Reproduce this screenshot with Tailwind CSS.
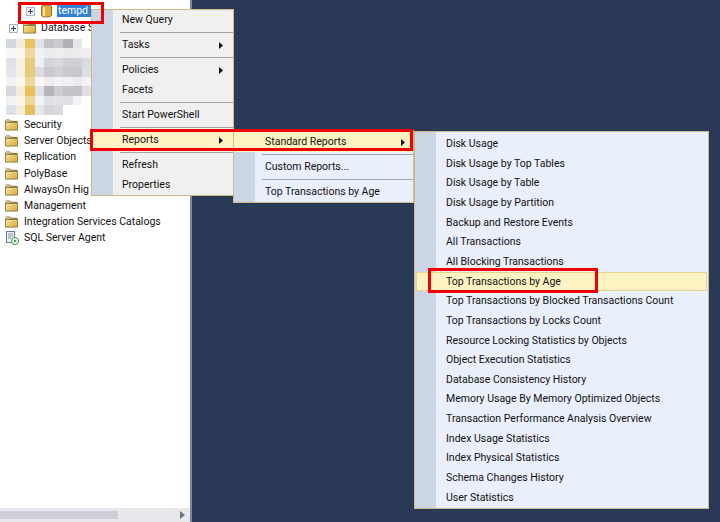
<!DOCTYPE html>
<html lang="en">
<head>
  <meta charset="UTF-8" />
  <title>Object Explorer</title>
  <script src="https://cdn.jsdelivr.net/npm/@tailwindcss/browser@4"></script>
</head>
<body class="relative w-[720px] h-[522px] overflow-hidden bg-[#2a3a56] font-['Roboto',sans-serif] text-[10.5px] text-[#111]">

  <svg class="absolute w-0 h-0">
    <defs>
      <linearGradient id="fold" x1="0" y1="0" x2="1" y2="1">
        <stop offset="0" stop-color="#fdf0b0" />
        <stop offset="1" stop-color="#dca52e" />
      </linearGradient>
      <symbol id="folder" viewBox="0 0 14 12">
        <path d="M.5 2.5V1.5L1.5.5H5L6 2h7l.5.5v9H.5z" fill="url(#fold)" stroke="#8a7a4a" />
        <path d="M1 3h12" stroke="#5a5236" />
      </symbol>
      <symbol id="plus" viewBox="0 0 9 9">
        <rect x=".5" y=".5" width="8" height="8" fill="#f4f4f8" stroke="#b0b4c0" />
        <path d="M2 4.5h5M4.5 2v5" stroke="#2b3f75" />
      </symbol>
    </defs>
  </svg>

  <!-- Object explorer -->
  <aside class="w-[192px] h-full flex flex-col bg-white border-r-2 border-[#7d879c]">
    <div class="flex-1 pt-[3px] leading-[16px]">
      <div class="h-[16.2px] flex items-center pl-[26px]">
        <svg class="w-[9px] h-[9px] shrink-0" ><use href="#plus" /></svg>
        <svg class="w-[11px] h-[14px] ml-[6px] shrink-0" viewBox="0 0 11 14">
          <path d="M.5 2.5C.5 .6 10.5 .6 10.5 2.5v9c0 1.9-10 1.9-10 0z" fill="#e2ad36" stroke="#8f7430" />
          <path d="M3 3v9" stroke="#f8e7a6" stroke-width="2" />
        </svg>
        <span class="ml-[5px] pl-[1px] w-[34px] h-[12px] flex items-center bg-[#3580d4] text-white">tempd</span>
      </div>
      <div class="h-[16.2px] mt-[1px] flex items-center pl-[9px] whitespace-nowrap">
        <svg class="w-[9px] h-[9px] shrink-0"><use href="#plus" /></svg>
        <svg class="w-[13px] h-[12px] ml-[5px] shrink-0"><use href="#folder" /></svg>
        <span class="ml-[5px]">Database S</span>
      </div>

      <!-- blurred databases -->
      <div class="grid grid-cols-[repeat(9,9.5px)] auto-rows-[9.5px] ml-[6px] mt-[2.6px] mb-[1px] h-[77px]">
        <i class="bg-[#d6d8df]"></i><i class="bg-[#f0eddc]"></i><i class="bg-[#e8c35f]"></i><i class="bg-[#e2e4ea]"></i><i class="bg-[#c2c3c8]"></i><i class="bg-[#cbcccf]"></i><i class="bg-[#b0b1b6]"></i><i class="bg-[#e4e6ea]"></i><i class="bg-white"></i>
        <i class="bg-[#f7f7f7]"></i><i class="bg-[#fbf9ee]"></i><i class="bg-[#efd89a]"></i><i class="bg-[#f2f2f6]"></i><i class="bg-[#ececef]"></i><i class="bg-[#eeeeef]"></i><i class="bg-[#ebebee]"></i><i class="bg-[#ededf0]"></i><i class="bg-[#eeeef0]"></i>
        <i class="bg-[#dfe1e8]"></i><i class="bg-[#f5f1e0]"></i><i class="bg-[#e8cb7a]"></i><i class="bg-[#eeeff5]"></i><i class="bg-[#d4d4da]"></i><i class="bg-[#d7d7dc]"></i><i class="bg-[#cfcfd5]"></i><i class="bg-[#d0d0d6]"></i><i class="bg-[#dadae2]"></i>
        <i class="bg-[#e5e6ed]"></i><i class="bg-[#f5f1df]"></i><i class="bg-[#e8cb78]"></i><i class="bg-[#dcdce0]"></i><i class="bg-[#c8c9d0]"></i><i class="bg-[#d0d0d5]"></i><i class="bg-[#c9c9ce]"></i><i class="bg-[#c8c8ce]"></i><i class="bg-[#dedfe6]"></i>
        <i class="bg-[#f3f3f5]"></i><i class="bg-[#faf8ec]"></i><i class="bg-[#efd89a]"></i><i class="bg-[#f8f8fa]"></i><i class="bg-[#eeeef0]"></i><i class="bg-[#f3f3f5]"></i><i class="bg-[#f0f0f2]"></i><i class="bg-[#eaeaec]"></i><i class="bg-[#f3f3f5]"></i>
        <i class="bg-[#d8d9df]"></i><i class="bg-[#f2eed9]"></i><i class="bg-[#e8c055]"></i><i class="bg-[#e0e2e8]"></i><i class="bg-[#b5b6bc]"></i><i class="bg-[#cdcdd2]"></i><i class="bg-[#c3c3c8]"></i><i class="bg-[#c4c4c8]"></i><i class="bg-[#e0e0e4]"></i>
        <i class="bg-[#f3f3f5]"></i><i class="bg-[#f9f6e8]"></i><i class="bg-[#eed79a]"></i><i class="bg-[#f3f3f6]"></i><i class="bg-[#e0dfe2]"></i><i class="bg-[#e3e3e6]"></i><i class="bg-[#dfe0e4]"></i><i class="bg-[#f4f4f6]"></i><i class="bg-white"></i>
        <i class="bg-[#dde2e8]"></i><i class="bg-[#f2eed9]"></i><i class="bg-[#e5c060]"></i><i class="bg-[#e6e8ec]"></i><i class="bg-[#d6d6da]"></i><i class="bg-[#dadade]"></i><i class="bg-white"></i><i class="bg-white"></i><i class="bg-white"></i>
      </div>

      <div class="h-[16.2px] flex items-center gap-[6px] pl-[5px] whitespace-nowrap"><svg class="w-[13px] h-[12px] shrink-0"><use href="#folder" /></svg><span>Security</span></div>
      <div class="h-[16.2px] flex items-center gap-[6px] pl-[5px] whitespace-nowrap"><svg class="w-[13px] h-[12px] shrink-0"><use href="#folder" /></svg><span>Server Objects</span></div>
      <div class="h-[16.2px] flex items-center gap-[6px] pl-[5px] whitespace-nowrap"><svg class="w-[13px] h-[12px] shrink-0"><use href="#folder" /></svg><span>Replication</span></div>
      <div class="h-[16.2px] flex items-center gap-[6px] pl-[5px] whitespace-nowrap"><svg class="w-[13px] h-[12px] shrink-0"><use href="#folder" /></svg><span>PolyBase</span></div>
      <div class="h-[16.2px] flex items-center gap-[6px] pl-[5px] whitespace-nowrap"><svg class="w-[13px] h-[12px] shrink-0"><use href="#folder" /></svg><span>AlwaysOn Hig</span></div>
      <div class="h-[16.2px] flex items-center gap-[6px] pl-[5px] whitespace-nowrap"><svg class="w-[13px] h-[12px] shrink-0"><use href="#folder" /></svg><span>Management</span></div>
      <div class="h-[16.2px] flex items-center gap-[6px] pl-[5px] whitespace-nowrap"><svg class="w-[13px] h-[12px] shrink-0"><use href="#folder" /></svg><span>Integration Services Catalogs</span></div>
      <div class="h-[16.2px] flex items-center gap-[5px] pl-[6px] whitespace-nowrap">
        <svg class="w-[13px] h-[14px] shrink-0" viewBox="0 0 13 14">
          <rect x=".5" y=".5" width="8" height="11" fill="#eef1f5" stroke="#6f7c8c" />
          <path d="M2 3h5M2 5h5M2 7h3" stroke="#7c90a8" />
          <circle cx="9" cy="10" r="3.5" fill="#fff" stroke="#2f8f3a" />
          <path d="M8 8.2v3.6l2.8-1.8z" fill="#2f8f3a" />
        </svg>
        <span>SQL Server Agent</span>
      </div>
    </div>
    <!-- horizontal scrollbar -->
    <div class="h-[14px] flex items-center justify-between bg-[#e8e8ec]">
      <div class="w-[118px] h-[8px] bg-[#cdced8]"></div>
      <svg class="w-[5px] h-[8px] mr-[5px]" viewBox="0 0 5 8"><path d="M0 0l5 4-5 4z" fill="#6d7280" /></svg>
    </div>
  </aside>

  <!-- Database context menu -->
  <div class="absolute left-[91px] top-[9px] w-[143px] h-[187px] border border-[#cdbb85] bg-[linear-gradient(to_right,#ccd5e5_21px,#f0f0f0_21px)] whitespace-nowrap">
    <div class="h-[20px] flex items-center pl-[30px]">New Query</div>
    <div class="h-[5px] flex items-center pl-[28px]"><div class="w-full h-px bg-[#a0a6ae]"></div></div>
    <div class="h-[20px] flex items-center justify-between pl-[30px] pr-[10px]">Tasks<svg class="w-[4px] h-[7px]" viewBox="0 0 4 7"><path d="M0 0l4 3.5L0 7z" fill="#111" /></svg></div>
    <div class="h-[5px] flex items-center pl-[28px]"><div class="w-full h-px bg-[#a0a6ae]"></div></div>
    <div class="h-[20px] flex items-center justify-between pl-[30px] pr-[10px]">Policies<svg class="w-[4px] h-[7px]" viewBox="0 0 4 7"><path d="M0 0l4 3.5L0 7z" fill="#111" /></svg></div>
    <div class="h-[20px] flex items-center pl-[30px]">Facets</div>
    <div class="h-[5px] flex items-center pl-[28px]"><div class="w-full h-px bg-[#a0a6ae]"></div></div>
    <div class="h-[20px] flex items-center pl-[30px]">Start PowerShell</div>
    <div class="h-[5px] flex items-center pl-[28px]"><div class="w-full h-px bg-[#a0a6ae]"></div></div>
    <div class="h-[20px] flex items-center justify-between pl-[30px] pr-[10px] bg-[#fdf3c2]">Reports<svg class="w-[4px] h-[7px]" viewBox="0 0 4 7"><path d="M0 0l4 3.5L0 7z" fill="#111" /></svg></div>
    <div class="h-[5px] flex items-center pl-[28px]"><div class="w-full h-px bg-[#a0a6ae]"></div></div>
    <div class="h-[20px] flex items-center pl-[30px]">Refresh</div>
    <div class="h-[20px] flex items-center pl-[30px]">Properties</div>
  </div>

  <!-- Reports submenu -->
  <div class="absolute left-[233px] top-[130px] w-[181px] h-[73px] pt-[1px] border border-[#cdbb85] bg-[linear-gradient(to_right,#ccd5e5_21px,#e9f0fb_21px)] whitespace-nowrap">
    <div class="h-[20px] flex items-center justify-between pl-[31px] pr-[8px] bg-[#fdf3c2]">Standard Reports<svg class="w-[4px] h-[7px]" viewBox="0 0 4 7"><path d="M0 0l4 3.5L0 7z" fill="#111" /></svg></div>
    <div class="h-[5px] flex items-center pl-[28px]"><div class="w-full h-px bg-[#a0a6ae]"></div></div>
    <div class="h-[20px] flex items-center pl-[31px]">Custom Reports...</div>
    <div class="h-[5px] flex items-center pl-[28px]"><div class="w-full h-px bg-[#a0a6ae]"></div></div>
    <div class="h-[20px] flex items-center pl-[31px]">Top Transactions by Age</div>
  </div>

  <!-- Standard Reports submenu -->
  <div class="absolute left-[414px] top-[131px] w-[295px] h-[378px] pt-[2px] border border-[#cdbb85] bg-[linear-gradient(to_right,#ccd5e5_21px,#e9f0fb_21px)] whitespace-nowrap">
    <div class="h-[19.67px] flex items-center pl-[31px]">Disk Usage</div>
    <div class="h-[19.67px] flex items-center pl-[31px]">Disk Usage by Top Tables</div>
    <div class="h-[19.67px] flex items-center pl-[31px]">Disk Usage by Table</div>
    <div class="h-[19.67px] flex items-center pl-[31px]">Disk Usage by Partition</div>
    <div class="h-[19.67px] flex items-center pl-[31px]">Backup and Restore Events</div>
    <div class="h-[19.67px] flex items-center pl-[31px]">All Transactions</div>
    <div class="h-[19.67px] flex items-center pl-[31px]">All Blocking Transactions</div>
    <div class="h-[19.67px] flex items-center pl-[29px] mx-[1px] bg-[#fdf3c2] border border-[#e8d48e]">Top Transactions by Age</div>
    <div class="h-[19.67px] flex items-center pl-[31px]">Top Transactions by Blocked Transactions Count</div>
    <div class="h-[19.67px] flex items-center pl-[31px]">Top Transactions by Locks Count</div>
    <div class="h-[19.67px] flex items-center pl-[31px]">Resource Locking Statistics by Objects</div>
    <div class="h-[19.67px] flex items-center pl-[31px]">Object Execution Statistics</div>
    <div class="h-[19.67px] flex items-center pl-[31px]">Database Consistency History</div>
    <div class="h-[19.67px] flex items-center pl-[31px]">Memory Usage By Memory Optimized Objects</div>
    <div class="h-[19.67px] flex items-center pl-[31px]">Transaction Performance Analysis Overview</div>
    <div class="h-[19.67px] flex items-center pl-[31px]">Index Usage Statistics</div>
    <div class="h-[19.67px] flex items-center pl-[31px]">Index Physical Statistics</div>
    <div class="h-[19.67px] flex items-center pl-[31px]">Schema Changes History</div>
    <div class="h-[19.67px] flex items-center pl-[31px]">User Statistics</div>
  </div>

  <!-- Red callouts -->
  <div class="absolute left-[18px] top-[2px] w-[86px] h-[22px] border-[3px] border-[#f00000]"></div>
  <div class="absolute left-[90px] top-[129px] w-[323px] h-[22px] border-[3px] border-[#f00000]"></div>
  <div class="absolute left-[428px] top-[268px] w-[170px] h-[25px] border-[3px] border-[#f00000]"></div>
</body>
</html>
